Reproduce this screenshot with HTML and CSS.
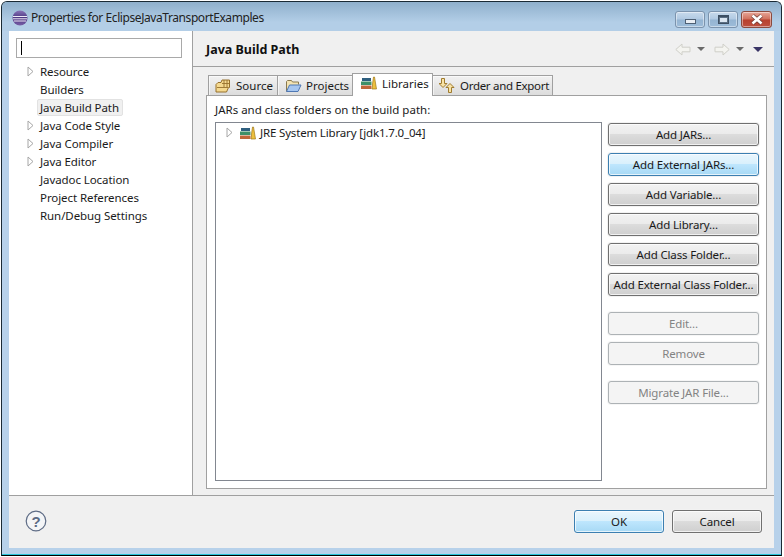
FILE: index.html
```html
<!DOCTYPE html>
<html lang="en">
<head>
<meta charset="utf-8">
<title>Properties for EclipseJavaTransportExamples</title>
<link rel="stylesheet" href="styles.css">
</head>
<body>
<div class="window">
  <div class="titlebar">
    <svg class="app-icon" width="16" height="16" viewBox="0 0 16 16"><defs><linearGradient id="ball" x1="0" y1="0" x2="0" y2="1"><stop offset="0" stop-color="#8a74b8"/><stop offset=".5" stop-color="#4a3580"/><stop offset="1" stop-color="#7a5fa8"/></linearGradient></defs><circle cx="8" cy="8" r="7.500" fill="url(#ball)"/><path d="M1 6.500h14M.8 8.800h14.400M1.800 11h12.400" stroke="#efeaf7" stroke-width="1"/></svg>
    <span class="title">Properties for EclipseJavaTransportExamples</span>
    <div class="caption">
      <span class="cap cap-min"><i class="min-glyph"></i></span>
      <span class="cap cap-max"><i class="max-glyph"></i></span>
      <span class="cap cap-close"><svg width="16" height="11" viewBox="0 0 16 11"><path d="M3.500 1.500l9 8M12.500 1.500l-9 8" stroke="#6e3a34" stroke-width="4"/><path d="M3.500 1.500l9 8M12.500 1.500l-9 8" stroke="#fff" stroke-width="2.600"/></svg></span>
    </div>
  </div>
  <div class="client">
    <div class="main">
      <aside class="nav">
        <div class="filter"><i class="caret"></i></div>
        <ul class="tree">
          <li><svg class="twisty" width="7" height="11" viewBox="0 0 7 11"><path d="M1 1l5 4.500-5 4.500z" fill="#fff" stroke="#a6a6a6"/></svg><span>Resource</span></li>
          <li><i class="nt"></i><span>Builders</span></li>
          <li><i class="nt"></i><span class="sel">Java Build Path</span></li>
          <li><svg class="twisty" width="7" height="11" viewBox="0 0 7 11"><path d="M1 1l5 4.500-5 4.500z" fill="#fff" stroke="#a6a6a6"/></svg><span>Java Code Style</span></li>
          <li><svg class="twisty" width="7" height="11" viewBox="0 0 7 11"><path d="M1 1l5 4.500-5 4.500z" fill="#fff" stroke="#a6a6a6"/></svg><span>Java Compiler</span></li>
          <li><svg class="twisty" width="7" height="11" viewBox="0 0 7 11"><path d="M1 1l5 4.500-5 4.500z" fill="#fff" stroke="#a6a6a6"/></svg><span>Java Editor</span></li>
          <li><i class="nt"></i><span>Javadoc Location</span></li>
          <li><i class="nt"></i><span>Project References</span></li>
          <li><i class="nt"></i><span>Run/Debug Settings</span></li>
        </ul>
      </aside>
      <section class="page">
        <header class="page-head">
          <h1>Java Build Path</h1>
          <div class="history">
            <svg width="16" height="13" viewBox="0 0 16 13"><path d="M.8 6.500L7 1v3.200h8v4.600H7V12z" fill="#f4f4f0" stroke="#cfcfc8"/></svg>
            <i class="drop"></i>
            <svg class="next" width="16" height="13" viewBox="0 0 16 13"><path d="M15.200 6.500L9 1v3.200H1v4.600h8V12z" fill="#f4f4f0" stroke="#cfcfc8"/></svg>
            <i class="drop"></i>
            <i class="drop dark"></i>
          </div>
        </header>
        <div class="tabs">
          <div class="tab tab-source">
            <svg width="16" height="14" viewBox="0 0 16 14"><path d="M1 13V5.500L3 3.500h3l1-2.500h7.500v7.500h-1L11.500 13z" fill="#f5d98f" stroke="#96702c"/><path d="M9 1v7M12 1v7M7 4.500h8M2 8.500h11" stroke="#96702c" stroke-width=".9" fill="none"/></svg>
            <span>Source</span>
          </div>
          <div class="tab tab-projects">
            <svg width="17" height="14" viewBox="0 0 17 14"><path d="M1.500 12.500V2.500l1-1h4l1 1.500h6v2.500" fill="#f3e3b2" stroke="#8a7a50"/><path d="M1.500 12.500l3-6.500h11.500l-3 6.500z" fill="#a6c6f0" stroke="#4f78b4"/></svg>
            <span>Projects</span>
          </div>
          <div class="tab tab-libraries active">
            <svg width="16" height="14" viewBox="0 0 16 14"><path d="M0 9.500h10.500V13H0z" fill="#c0663a"/><path d="M0 5.500h10.500v3.500H0z" fill="#3f8f68"/><path d="M1 2h9v3H1z" fill="#2f5f7f"/><path d="M11.500 10V8L12.500 1h1L15.500 13h-4.500z" fill="#edc03e" stroke="#a07818" stroke-width=".7"/></svg>
            <span>Libraries</span>
          </div>
          <div class="tab tab-order">
            <svg width="16" height="15" viewBox="0 0 16 15"><path d="M2.500 .5h3v5h2.500l-4 4-4-4h2.500z" fill="#f8e3a6" stroke="#a07c30"/><path d="M9.500 14.500v-5H7l4-4 4 4h-2.500v5z" fill="#f8e3a6" stroke="#a07c30"/></svg>
            <span>Order and Export</span>
          </div>
        </div>
        <div class="tab-body">
          <div class="caption-label">JARs and class folders on the build path:</div>
          <div class="columns">
            <div class="list">
              <div class="row">
                <svg class="twisty" width="7" height="11" viewBox="0 0 7 11"><path d="M1 1l5 4.500-5 4.500z" fill="#fff" stroke="#a6a6a6"/></svg>
                <svg width="16" height="14" viewBox="0 0 16 14"><path d="M0 9.500h10.500V13H0z" fill="#c0663a"/><path d="M0 5.500h10.500v3.500H0z" fill="#3f8f68"/><path d="M1 2h9v3H1z" fill="#2f5f7f"/><path d="M11.500 10V8L12.500 1h1L15.500 13h-4.500z" fill="#edc03e" stroke="#a07818" stroke-width=".7"/></svg>
                <span class="row-text">JRE System Library [jdk1.7.0_04]</span>
              </div>
            </div>
            <div class="buttons">
              <button class="btn">Add JARs...</button>
              <button class="btn hot">Add External JARs...</button>
              <button class="btn">Add Variable...</button>
              <button class="btn">Add Library...</button>
              <button class="btn">Add Class Folder...</button>
              <button class="btn">Add External Class Folder...</button>
              <button class="btn off gap">Edit...</button>
              <button class="btn off">Remove</button>
              <button class="btn off gap">Migrate JAR File...</button>
            </div>
          </div>
        </div>
      </section>
    </div>
    <footer class="footer">
      <svg class="help" width="22" height="22" viewBox="0 0 22 22"><circle cx="11" cy="11" r="9.800" fill="#f4f5f7" stroke="#5d6b85" stroke-width="1.200"/><text x="11" y="16.500" text-anchor="middle" class="help-q">?</text></svg>
      <div class="actions">
        <button class="btn wide hot">OK</button>
        <button class="btn wide">Cancel</button>
      </div>
    </footer>
  </div>
</div>
</body>
</html>
```
FILE: styles.css
```css
* { box-sizing: border-box; }
html, body { margin: 0; height: 100%; }
body {
  width: 784px;
  height: 557px;
  overflow: hidden;
  background: #fff;
  font-family: "Noto Sans", "Liberation Sans", sans-serif;
  font-size: 11.5px;
  color: #1a1a1a;
}
.window {
  margin: 1px 0 0 1px;
  width: 781px;
  height: 555px;
  background: #b7d1ea;
  border: 1px solid #1a2a35;
  border-bottom-color: #000;
  border-radius: 6px 6px 0 0;
  padding: 0 7px 7px 7px;
  display: flex;
  flex-direction: column;
  box-shadow: inset 0 -1px 0 #27c4d8;
}
.titlebar {
  height: 29px;
  flex: none;
  display: flex;
  align-items: center;
  gap: 3px;
  margin: 0 -7px;
  padding: 0 9px 0 10px;
  background: linear-gradient(#8fb0cc, #b3cee7 70%);
  border-radius: 5px 5px 0 0;
}
.app-icon { flex: none; margin-top: 2px; }
.title { font-size: 12px; letter-spacing: -.42px; color: #222; margin-top: 2px; }
.caption { margin-left: auto; align-self: flex-start; margin-top: 9px; display: flex; gap: 3px; }
.cap {
  height: 17px;
  width: 30px;
  display: flex;
  align-items: center;
  justify-content: center;
  border: 1px solid #7b93ad;
  border-radius: 3px;
  background: linear-gradient(#c8daec, #b0c9e2 48%, #94b4d2 52%, #9dbcd9);
  box-shadow: inset 0 0 0 1px rgba(255, 255, 255, .45);
}
.cap-close {
  width: 31px;
  border-color: #8a4a3e;
  background: linear-gradient(#e8a799, #d0705c 48%, #b8402e 52%, #bd5040);
}
.min-glyph { width: 11px; height: 5px; margin-top: 4px; border: 1px solid #4e6074; background: #e9eef4; }
.max-glyph { width: 11px; height: 9px; border: 1px solid #3d4f63; border-top-width: 2px; background: #dbe6f1; box-shadow: inset 0 0 0 1px #5c7085; }
.client {
  flex: 1;
  display: flex;
  flex-direction: column;
  background: #f0f0f0;
  min-height: 0;
}
.main { flex: 1; display: flex; min-height: 0; }
.nav {
  width: 184px;
  flex: none;
  background: #fff;
  border-right: 1px solid #a0a0a0;
  padding: 7px 0 0 7px;
}
.filter {
  width: 166px;
  height: 20px;
  border: 1px solid #a9a9a9;
  padding: 2px 0 0 4px;
  background: #fff;
}
.caret { display: block; width: 1px; height: 14px; background: #000; }
.tree { list-style: none; margin: 4px 0 0; padding: 0; }
.tree li { height: 18px; display: flex; align-items: center; padding-left: 11px; gap: 5px; letter-spacing: -.08px; }
.tree .twisty, .nt { flex: none; width: 7px; height: 11px; margin-top: 1px; }
.nt { display: block; }
.tree span { padding: 0 1px; }
.tree .sel {
  margin-left: -2px;
  padding: 0 3px 0 2px;
  height: 17px;
  line-height: 15px;
  background: #f0f0f0;
  border: 1px solid #e2e2e2;
  border-radius: 2px;
}
.page { flex: 1; min-width: 0; display: flex; flex-direction: column; }
.page-head {
  height: 36px;
  flex: none;
  display: flex;
  align-items: center;
  padding: 1px 11px 0 13px;
  border-bottom: 1px solid #a0a0a0;
}
h1 { margin: 0; font-size: 12.5px; font-weight: 700; color: #111; }
.history { margin-left: auto; display: flex; align-items: center; gap: 6px; }
.history .next { margin-left: 3px; }
.drop { width: 0; height: 0; border: 4px solid transparent; border-top: 4px solid #6a6a6a; border-bottom: 0; }
.drop.dark { border-top: 5px solid #3a3566; border-left-width: 5px; border-right-width: 5px; margin-left: 3px; }
.tabs { display: flex; margin: 8px 0 0 15px; height: 20px; align-items: flex-end; flex: none; }
.tab {
  height: 20px;
  flex: none;
  display: flex;
  align-items: center;
  gap: 5px;
  margin-right: -1px;
  border: 1px solid #a0a0a0;
  border-bottom: 0;
  background: linear-gradient(#f2f2f2, #dcdcdc);
  white-space: nowrap;
  box-shadow: inset 1px 1px 0 rgba(255, 255, 255, .6);
}
.tab-source { width: 70px; padding-left: 6px; }
.tab-projects { width: 76px; padding-left: 7px; gap: 4px; }
.tab-libraries { width: 81px; padding-left: 8px; }
.tab-order { width: 121px; padding-left: 6px; letter-spacing: -.3px; }
.tab.active {
  height: 23px;
  margin-bottom: -1px;
  background: #fff;
  position: relative;
  z-index: 1;
  padding-bottom: 4px;
}
.tab-body {
  flex: none;
  width: 561px;
  height: 394px;
  margin-left: 13px;
  background: #fff;
  border: 1px solid #a0a0a0;
  padding: 0 0 7px 8px;
  display: flex;
  flex-direction: column;
}
.caption-label { height: 26px; line-height: 27px; }
.columns { flex: 1; display: flex; min-height: 0; gap: 6px; }
.list { width: 387px; flex: none; border: 1px solid #828790; padding: 1px 0 0 10px; }
.row { display: flex; align-items: center; gap: 4px; height: 17px; }
.row .twisty { margin-right: 3px; }
.row-text { letter-spacing: -.17px; }
.buttons { width: 151px; flex: none; display: flex; flex-direction: column; gap: 7px; padding-top: 1px; }
.btn {
  height: 23px;
  width: 151px;
  flex: none;
  padding: 0;
  font: inherit;
  letter-spacing: -.15px;
  white-space: nowrap;
  color: #1a1a1a;
  border: 1px solid #707070;
  border-radius: 3px;
  background: linear-gradient(#f2f2f2 0, #ebebeb 48%, #dcdcdc 50%, #cfcfcf 100%);
  box-shadow: inset 0 0 0 1px rgba(255, 255, 255, .7), 0 0 0 1px #f2f2f2;
}
.btn.hot {
  border-color: #3c7fb1;
  background: linear-gradient(#eaf6fd 0, #d9f0fc 48%, #bee6fd 50%, #a7d9f5 100%);
}
.btn.off { color: #838383; border-color: #adb2b5; background: #f4f4f4; box-shadow: 0 0 0 1px #f6f6f6; }
.btn.gap { margin-top: 9px; }
.footer {
  height: 53px;
  flex: none;
  border-top: 1px solid #a0a0a0;
  display: flex;
  align-items: center;
  padding: 0 12px 2px 16px;
}
.help-q { font: 700 15px "Liberation Sans", sans-serif; fill: #5d6b85; }
.actions { margin-left: auto; display: flex; gap: 8px; }
.wide { width: 90px; }
```
